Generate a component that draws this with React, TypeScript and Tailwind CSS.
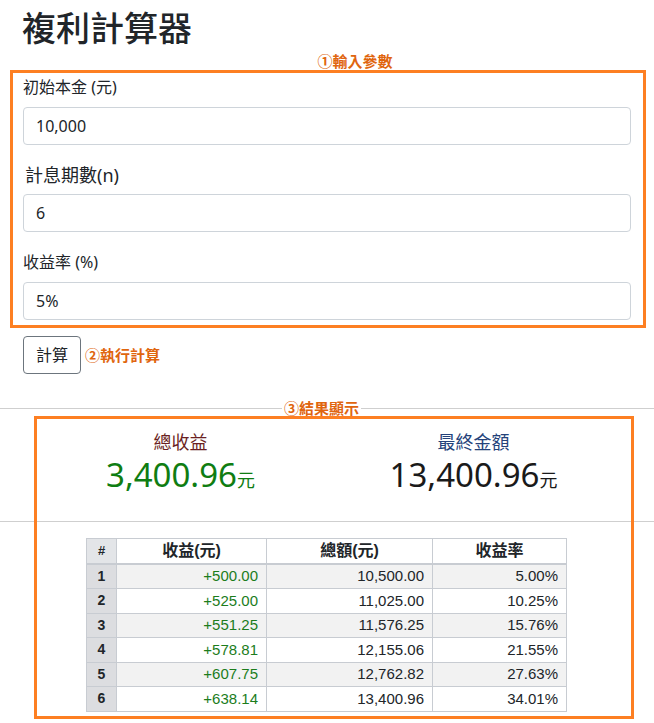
import React from "react";

const rows = [
  ["1", "+500.00", "10,500.00", "5.00%"],
  ["2", "+525.00", "11,025.00", "10.25%"],
  ["3", "+551.25", "11,576.25", "15.76%"],
  ["4", "+578.81", "12,155.06", "21.55%"],
  ["5", "+607.75", "12,762.82", "27.63%"],
  ["6", "+638.14", "13,400.96", "34.01%"],
];

const font = { fontFamily: '"Segoe UI", "Noto Sans", "Noto Sans CJK TC", sans-serif' };

export default function App() {
  return (
    <div className="relative w-[654px] h-[723px] bg-white text-[#212529] overflow-hidden" style={font}>
      <h1 className="pl-[22px] pt-[6px] text-[34px] leading-[44px] font-medium">複利計算器</h1>
      <div className="text-center text-[15px] font-bold text-[#e0650e] pl-[56px] leading-[20px] mt-[1px]">①輸入參數</div>
      <div className="px-[23px] pt-[4px]">
        <div className="text-[16px] leading-[24px] mb-[8px]">初始本金 (元)</div>
        <div className="h-[38px] w-[608px] border border-[#ced4da] rounded-[4px] flex items-center px-[12px] text-[16px]">10,000</div>
        <div className="text-[18px] leading-[24px] mt-[18px] mb-[7px] pl-[2px]">計息期數(n)</div>
        <div className="h-[38px] w-[608px] border border-[#ced4da] rounded-[4px] flex items-center px-[12px] text-[16px]">6</div>
        <div className="text-[16px] leading-[24px] mt-[18px] mb-[8px]">收益率 (%)</div>
        <div className="h-[38px] w-[608px] border border-[#ced4da] rounded-[4px] flex items-center px-[12px] text-[16px]">5%</div>
        <div className="flex items-center mt-[16px]">
          <div className="h-[38px] w-[58px] border border-[#6c757d] rounded-[4px] flex items-center justify-center text-[16px]">計算</div>
          <span className="ml-[4px] text-[15px] font-bold text-[#e0650e]">②執行計算</span>
        </div>
      </div>
      <div className="relative mt-[34px] border-t border-[#cfcfcf]">
        <span className="absolute left-[282px] -top-[11px] bg-white px-[2px] text-[15px] leading-[20px] font-bold text-[#e0650e]">③結果顯示</span>
      </div>
      <div className="grid grid-cols-2 pt-[20px] pb-[21px] px-[34px]">
        <div className="text-center">
          <div className="text-[18px] leading-[26px] text-[#6b1f22]">總收益</div>
          <div className="text-[#0f7d12] text-[33px] leading-[40px]">3,400.96<span className="text-[18px]">元</span></div>
        </div>
        <div className="text-center">
          <div className="text-[18px] leading-[26px] text-[#24427a]">最終金額</div>
          <div className="text-[#1a1a1a] text-[33px] leading-[40px]">13,400.96<span className="text-[18px]">元</span></div>
        </div>
      </div>
      <div className="border-t border-[#cfcfcf]"></div>
      <div className="pl-[86px] pt-[16px]">
        <table className="border-collapse text-[15px] w-[481px]" style={{ fontFamily: '"Liberation Sans", "Noto Sans CJK TC", sans-serif' }}>
          <thead>
            <tr className="h-[25px] border-b-2 border-[#c8ccd2]">
              <th className="w-[30px] border border-[#c8ccd2] bg-[#e3e5e8] text-[13px]">#</th>
              <th className="w-[150px] border border-[#c8ccd2] text-[16px]">收益(元)</th>
              <th className="w-[166px] border border-[#c8ccd2] text-[16px]">總額(元)</th>
              <th className="border border-[#c8ccd2] text-[16px]">收益率</th>
            </tr>
          </thead>
          <tbody>
            {rows.map((r, i) => (
              <tr key={r[0]} className={`h-[24.5px] ${i % 2 === 0 ? "bg-[#f2f2f2]" : "bg-white"}`}>
                <td className="border border-[#c8ccd2] bg-[#dcdde0] text-center font-bold text-[14px]">{r[0]}</td>
                <td className="border border-[#c8ccd2] text-right pr-[8px] text-[#1c7d1c]">{r[1]}</td>
                <td className="border border-[#c8ccd2] text-right pr-[8px]">{r[2]}</td>
                <td className="border border-[#c8ccd2] text-right pr-[8px]">{r[3]}</td>
              </tr>
            ))}
          </tbody>
        </table>
      </div>
      <div className="absolute left-[10px] top-[70px] w-[636px] h-[258px] border-[3px] border-[#fd7f22] pointer-events-none" />
      <div className="absolute left-[34px] top-[416px] w-[600px] h-[303px] border-[3px] border-[#fd7f22] pointer-events-none" />
    </div>
  );
}
